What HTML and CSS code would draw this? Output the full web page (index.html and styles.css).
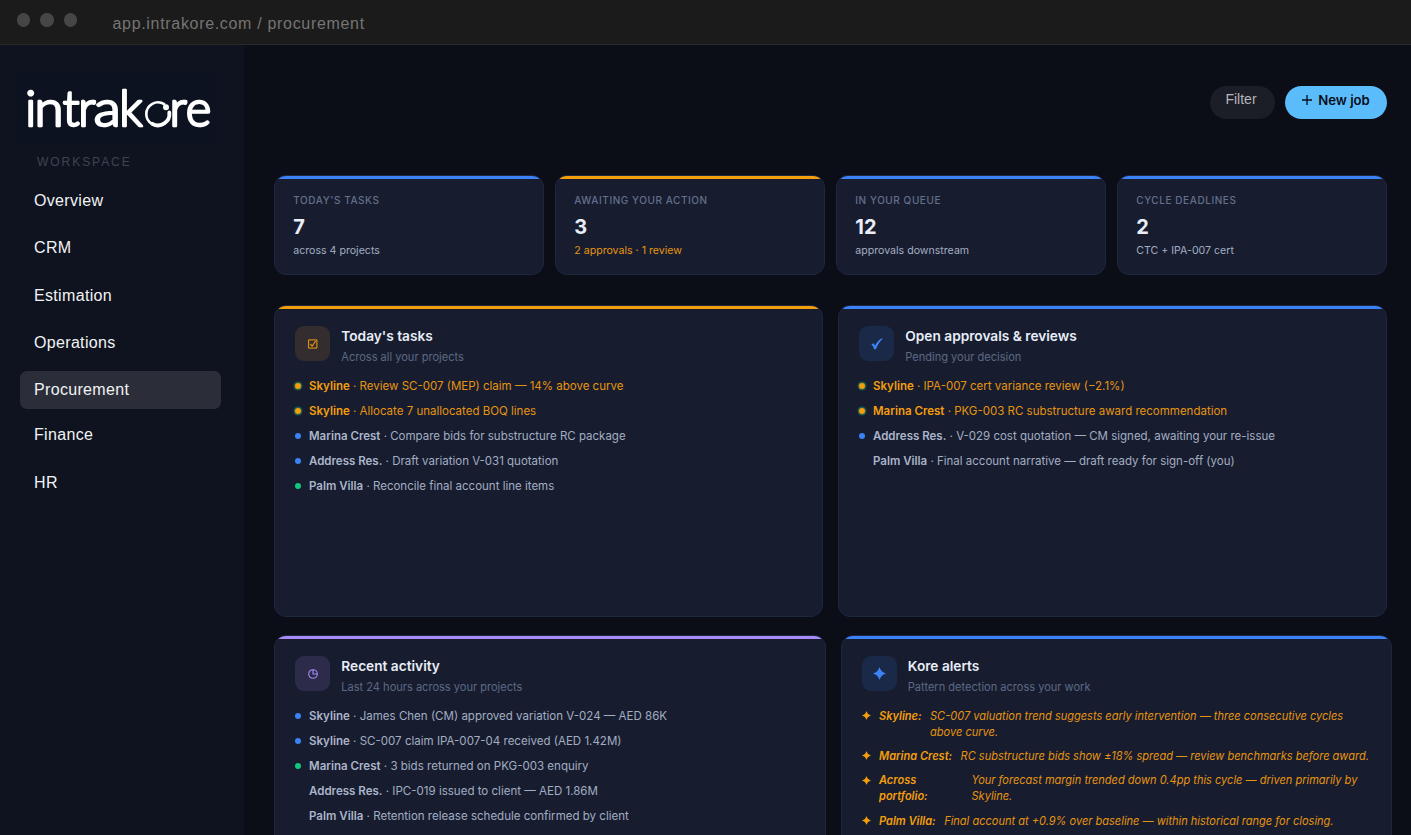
FILE: index.html
```html
<!DOCTYPE html>
<html lang="en">
<head>
<meta charset="utf-8">
<title>Intrakore – Procurement</title>
<link rel="stylesheet" href="styles.css">
</head>
<body>
<header class="chrome">
  <span class="light"></span><span class="light"></span><span class="light"></span>
  <span class="url">app.intrakore.com / procurement</span>
</header>
<div class="app">
  <aside class="sidebar">
    <div class="brand">
      <svg class="logo" width="204" height="74" viewBox="14 71 204 74" role="img" aria-label="intrakore">
        <g class="word">
          <text y="125.800" x="25.200">i</text>
          <text y="125.800" x="34.500" textLength="29" lengthAdjust="spacingAndGlyphs">n</text>
          <text y="125.800" x="62.700">t</text>
          <text y="125.800" x="78.300">r</text>
          <text y="125.800" x="93.800" textLength="27" lengthAdjust="spacingAndGlyphs">a</text>
          <text y="125.800" x="119.300">k</text>
          <text y="125.800" x="169.500">r</text>
          <text y="125.800" x="185.800">e</text>
        </g>
        <path class="ring-thin" d="M152 124A11.700 11.700 0 0 1 146.300 114A11.700 11.700 0 0 1 164.200 104.100"/>
        <path class="ring" d="M169.300 112.500A11.400 11.400 0 0 1 152.300 123.800"/>
        <circle cx="166" cy="107.300" r="3" fill="#fff"/>
      </svg>
    </div>
    <div class="section">WORKSPACE</div>
    <nav class="nav">
      <a class="item">Overview</a>
      <a class="item">CRM</a>
      <a class="item">Estimation</a>
      <a class="item">Operations</a>
      <a class="item active">Procurement</a>
      <a class="item">Finance</a>
      <a class="item">HR</a>
    </nav>
  </aside>
  <main class="main">
    <div class="actions">
      <button class="btn filter">Filter</button>
      <button class="btn primary"><svg width="10" height="10" viewBox="0 0 10 10"><path d="M5 0v10M0 5h10" stroke="#0a0d18" stroke-width="1.300"/></svg>New job</button>
    </div>
    <section class="stats">
      <div class="card stat"><div class="label">TODAY'S TASKS</div><div class="value">7</div><div class="note">across 4 projects</div></div>
      <div class="card stat amber"><div class="label">AWAITING YOUR ACTION</div><div class="value">3</div><div class="note warn">2 approvals · 1 review</div></div>
      <div class="card stat"><div class="label">IN YOUR QUEUE</div><div class="value">12</div><div class="note">approvals downstream</div></div>
      <div class="card stat"><div class="label">CYCLE DEADLINES</div><div class="value">2</div><div class="note">CTC + IPA-007 cert</div></div>
    </section>
    <section class="panels">
      <article class="card panel amber">
        <div class="head">
          <div class="icon"><svg width="10" height="10" viewBox="0 0 10 10" fill="none" stroke="currentColor"><path d="M.6.9h8.300v8.200H.6z"/><path d="M2.400 5.200l1.700 2L7.600 2" stroke-width="1.100"/></svg></div>
          <div><h2>Today's tasks</h2><p>Across all your projects</p></div>
        </div>
        <ul class="list">
          <li class="hot"><i class="dot"></i><span><b>Skyline</b> · Review SC-007 (MEP) claim — 14% above curve</span></li>
          <li class="hot"><i class="dot"></i><span><b>Skyline</b> · Allocate 7 unallocated BOQ lines</span></li>
          <li><i class="dot blue"></i><span><b>Marina Crest</b> · Compare bids for substructure RC package</span></li>
          <li><i class="dot blue"></i><span><b>Address Res.</b> · Draft variation V-031 quotation</span></li>
          <li><i class="dot green"></i><span><b>Palm Villa</b> · Reconcile final account line items</span></li>
        </ul>
      </article>
      <article class="card panel">
        <div class="head">
          <div class="icon"><svg width="12" height="12" viewBox="0 0 12 12" fill="currentColor"><path d="M.4 6.500 2.400 5.200 4.200 7.500C5.600 4.600 8 1.700 11 .3l.6.800C8.800 3.600 6.400 7.200 5 11.300H3.200C2.600 9.400 1.700 7.600.4 6.500z"/></svg></div>
          <div><h2>Open approvals &amp; reviews</h2><p>Pending your decision</p></div>
        </div>
        <ul class="list">
          <li class="hot"><i class="dot"></i><span><b>Skyline</b> · IPA-007 cert variance review (−2.1%)</span></li>
          <li class="hot"><i class="dot"></i><span><b>Marina Crest</b> · PKG-003 RC substructure award recommendation</span></li>
          <li><i class="dot blue"></i><span><b>Address Res.</b> · V-029 cost quotation — CM signed, awaiting your re-issue</span></li>
          <li><i class="dot none"></i><span><b>Palm Villa</b> · Final account narrative — draft ready for sign-off (you)</span></li>
        </ul>
      </article>
    </section>
    <section class="panels lower">
      <article class="card panel violet">
        <div class="head">
          <div class="icon"><svg width="10" height="10" viewBox="0 0 10 10" fill="none" stroke="currentColor" stroke-width="1.100"><circle cx="5" cy="5" r="4.300"/><path d="M5 .7V5h4.300"/></svg></div>
          <div><h2>Recent activity</h2><p>Last 24 hours across your projects</p></div>
        </div>
        <ul class="list">
          <li><i class="dot blue"></i><span><b>Skyline</b> · James Chen (CM) approved variation V-024 — AED 86K</span></li>
          <li><i class="dot blue"></i><span><b>Skyline</b> · SC-007 claim IPA-007-04 received (AED 1.42M)</span></li>
          <li><i class="dot green"></i><span><b>Marina Crest</b> · 3 bids returned on PKG-003 enquiry</span></li>
          <li><i class="dot none"></i><span><b>Address Res.</b> · IPC-019 issued to client — AED 1.86M</span></li>
          <li><i class="dot none"></i><span><b>Palm Villa</b> · Retention release schedule confirmed by client</span></li>
        </ul>
      </article>
      <article class="card panel">
        <div class="head">
          <div class="icon"><svg width="13" height="13" viewBox="0 0 12 12" fill="currentColor"><path d="M6 0Q7.300 4.700 12 6Q7.300 7.300 6 12Q4.700 7.300 0 6Q4.700 4.700 6 0z"/></svg></div>
          <div><h2>Kore alerts</h2><p>Pattern detection across your work</p></div>
        </div>
        <ul class="alerts">
          <li><svg class="star" viewBox="0 0 12 12"><path d="M6 0Q7.300 4.700 12 6Q7.300 7.300 6 12Q4.700 7.300 0 6Q4.700 4.700 6 0z"/></svg><b>Skyline:</b><span>SC-007 valuation trend suggests early intervention — three consecutive cycles above curve.</span></li>
          <li><svg class="star" viewBox="0 0 12 12"><path d="M6 0Q7.300 4.700 12 6Q7.300 7.300 6 12Q4.700 7.300 0 6Q4.700 4.700 6 0z"/></svg><b>Marina Crest:</b><span>RC substructure bids show ±18% spread — review benchmarks before award.</span></li>
          <li><svg class="star" viewBox="0 0 12 12"><path d="M6 0Q7.300 4.700 12 6Q7.300 7.300 6 12Q4.700 7.300 0 6Q4.700 4.700 6 0z"/></svg><b class="wide">Across portfolio:</b><span>Your forecast margin trended down 0.4pp this cycle — driven primarily by Skyline.</span></li>
          <li><svg class="star" viewBox="0 0 12 12"><path d="M6 0Q7.300 4.700 12 6Q7.300 7.300 6 12Q4.700 7.300 0 6Q4.700 4.700 6 0z"/></svg><b>Palm Villa:</b><span>Final account at +0.9% over baseline — within historical range for closing.</span></li>
        </ul>
      </article>
    </section>
  </main>
</div>
</body>
</html>
```
FILE: styles.css
```css
* { box-sizing: border-box; margin: 0; padding: 0; }
body {
  width: 1411px; height: 835px; overflow: hidden;
  display: flex; flex-direction: column;
  background: #0b0d17; font-family: Inter, sans-serif; color: #a3adc2;
}
.chrome {
  flex: none; height: 45px; display: flex; gap: 10px; padding: 13px 16.500px 0;
  background: #1b1b1b; border-bottom: 1px solid #28282b;
}
.light { flex: none; width: 13.500px; height: 13.500px; border-radius: 50%; background: #464646; }
.url {
  margin-left: 25.500px; font: 16px/21px "Liberation Sans", Arial, sans-serif;
  letter-spacing: .68px; color: #757575;
}
.app { flex: 1; min-height: 0; display: flex; }

.sidebar { flex: none; width: 244px; background: #0f1320; font-family: "Liberation Sans", Arial, sans-serif; }
.brand { width: 204px; height: 74px; margin: 26px 0 0 14px; background: #0c121f; }
.logo { display: block; }
.word { font: 300 49px Lato, sans-serif; fill: #fff; stroke: #fff; stroke-width: 2.500px; stroke-linejoin: round; }
.ring, .ring-thin { fill: none; stroke: #fff; stroke-linecap: round; stroke-width: 3.800px; }
.ring-thin { stroke-width: 2.600px; }
.section { margin: 10px 0 0 37px; font-size: 12px; line-height: 14px; letter-spacing: 1.950px; color: #3f4350; }
.nav { display: flex; flex-direction: column; gap: 9.300px; margin: 13px 23px 0 20px; }
.item {
  height: 38px; padding-left: 14px; border-radius: 7px;
  font-size: 16px; line-height: 38px; letter-spacing: .33px; color: #f2f3f5;
}
.item.active { background: #2b2e39; }
.item.active + .item { margin-top: -2px; }

.main { flex: 1; min-width: 0; padding: 41px 0 0 30px; overflow: hidden; }
.actions { display: flex; justify-content: flex-end; gap: 10px; padding-right: 24px; }
.btn { height: 33px; border: 0; border-radius: 17px; display: flex; justify-content: center; }
.filter {
  width: 65px; padding-right: 3px; background: #1b1d27; color: #b4b5b9;
  font: 14px/27px "Liberation Sans", Arial, sans-serif;
}
.primary {
  width: 102px; gap: 6px; background: #5bbcfb; color: #0a0d18;
  font: 600 13.200px/29px Inter, sans-serif;
}
.primary svg { margin-top: 9px; }

.card { position: relative; overflow: hidden; background: #171d2f; border: 1px solid #1d2740; border-radius: 12px; }
.card::before { content: ""; position: absolute; left: 0; right: 0; top: 0; height: 3px; background: #3b82f6; }
.card.amber::before { background: #f59e0b; }
.card.violet::before { background: #a78bfa; }

.stats { display: grid; grid-template-columns: repeat(4, 1fr); gap: 11px; margin-top: 56px; width: 1113px; }
.stat { height: 99.500px; padding: 18px 18.300px; }
.label { font-size: 10px; line-height: 13px; font-weight: 500; letter-spacing: .57px; color: #64708b; }
.value { margin-top: 7px; font-size: 20px; line-height: 26px; font-weight: 700; color: #e8edf7; }
.note { margin-top: 3.500px; font-size: 10.600px; line-height: 14px; }
.warn { color: #e6940f; }

.panels { display: grid; grid-template-columns: 1fr 1fr; gap: 15px; margin-top: 30px; width: 1113px; }
.panel { height: 312px; padding: 20px; }
.lower { margin-top: 18px; width: 1118px; }
.head { display: flex; gap: 11.300px; }
.icon {
  width: 35px; height: 35px; border-radius: 9px; display: flex; align-items: center; justify-content: center;
  padding-top: 1px; background: #1a2947; color: #3b82f6;
}
.amber .icon { background: #332d30; color: #f59e0b; }
.violet .icon { background: #2d2b4a; color: #a78bfa; }
h2 { font-size: 13.700px; line-height: 21px; font-weight: 600; color: #e8edf7; }
.head p { margin-top: 2px; font-size: 11.050px; line-height: 16px; color: #5d6983; }
.list { list-style: none; display: flex; flex-direction: column; gap: 8px; margin-top: 12.500px; }
.list li { display: flex; align-items: center; gap: 8px; height: 17px; font-size: 11.500px; white-space: nowrap; }
.lower .list li { font-size: 11.540px; }
.dot { width: 6px; height: 6px; border-radius: 50%; background: #f59e0b; box-shadow: 0 0 0 1.500px #1b5a4b; }
.dot.blue { background: #3b82f6; box-shadow: none; }
.dot.green { background: #10c77c; box-shadow: none; }
.dot.none { background: none; box-shadow: none; }
.list b { font-weight: 600; color: #abb5ca; }
.list .hot, .list .hot b { color: #e6940f; }
.list .hot b { color: #f59e0b; }
.alerts { list-style: none; display: flex; flex-direction: column; gap: 8px; margin-top: 13px; }
.alerts li { display: flex; gap: 8.500px; font-size: 11.040px; line-height: 16.200px; font-style: italic; color: #e6940f; }
.alerts b { flex: none; font-weight: 600; color: #f59e0b; }
.alerts .wide { width: 84px; padding-right: 20px; }
.star { flex: none; width: 9px; height: 9px; margin-top: 3.500px; fill: #f59e0b; }
```
